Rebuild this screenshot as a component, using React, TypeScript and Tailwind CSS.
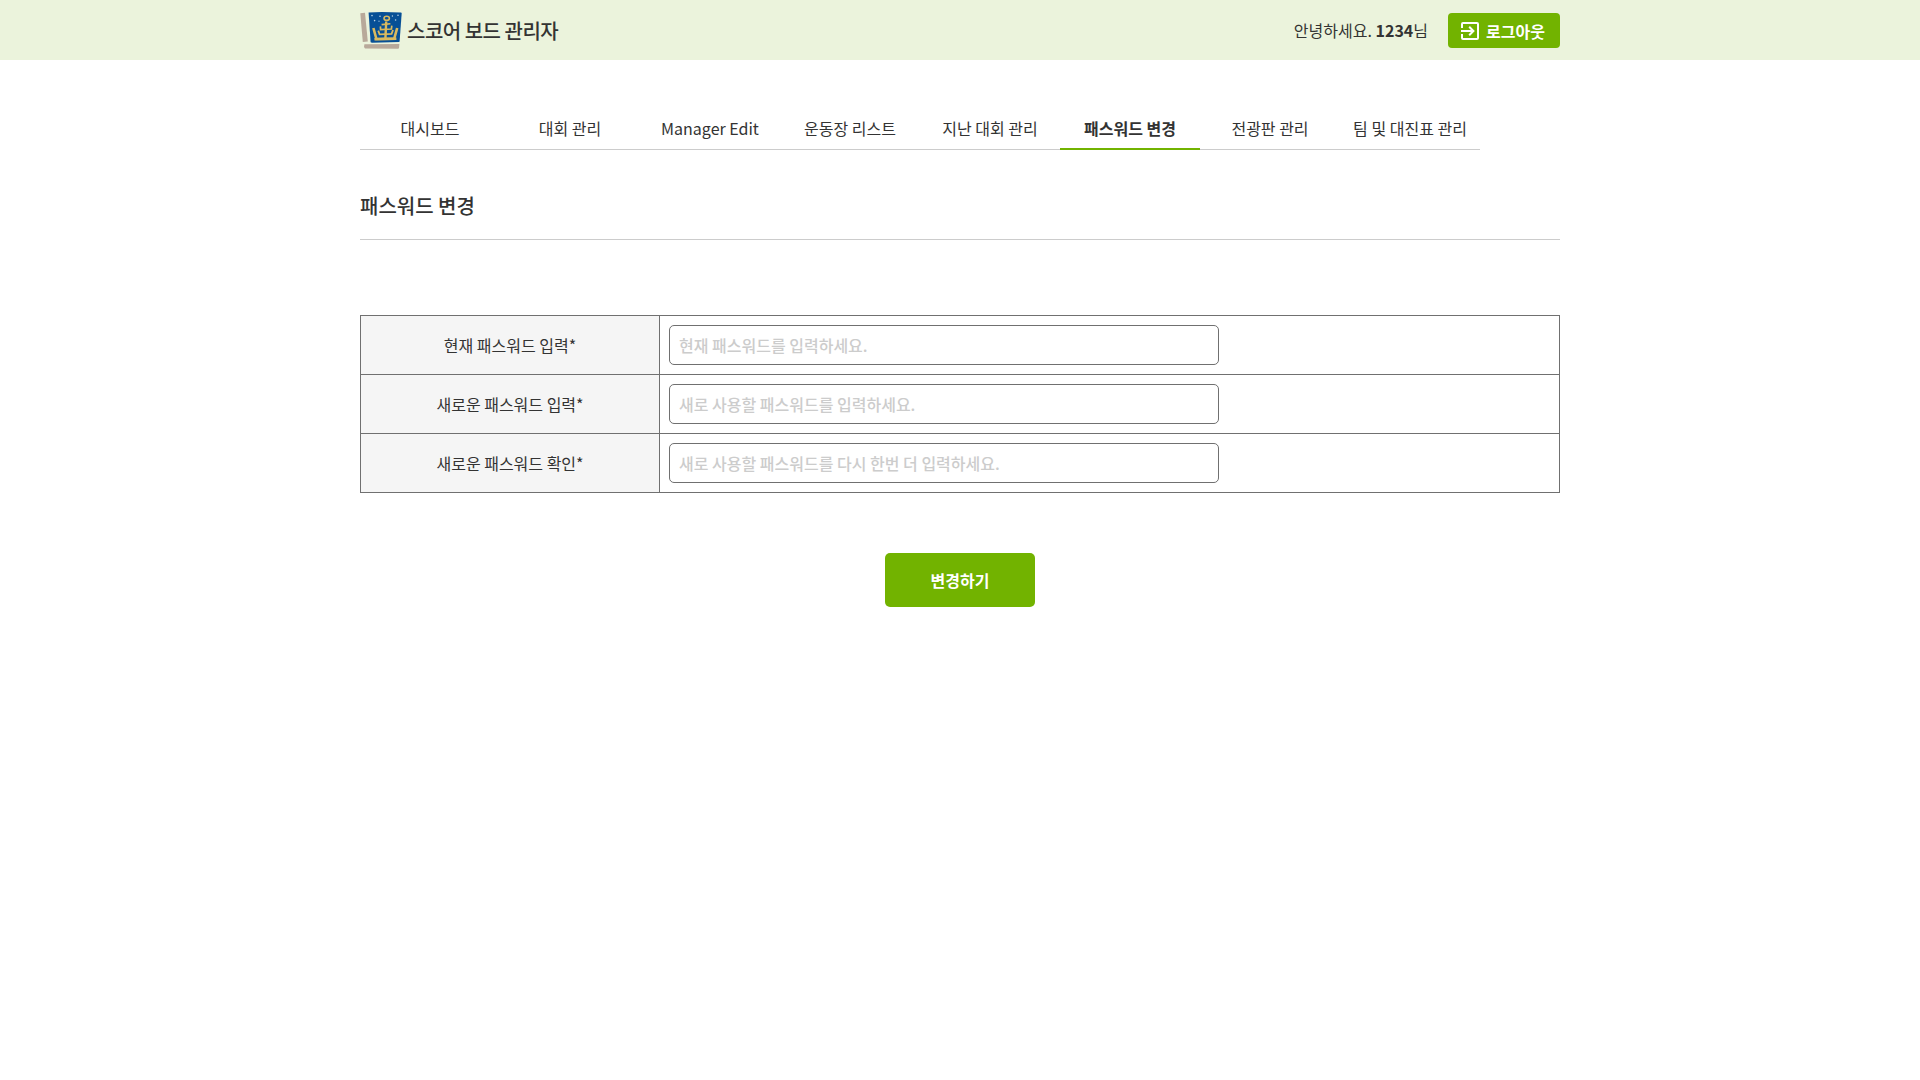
const tabs = [
  '대시보드',
  '대회 관리',
  'Manager Edit',
  '운동장 리스트',
  '지난 대회 관리',
  '패스워드 변경',
  '전광판 관리',
  '팀 및 대진표 관리',
];
const activeTab = '패스워드 변경';

const fields = [
  { id: 'current', label: '현재 패스워드 입력*', placeholder: '현재 패스워드를 입력하세요.' },
  { id: 'next', label: '새로운 패스워드 입력*', placeholder: '새로 사용할 패스워드를 입력하세요.' },
  { id: 'confirm', label: '새로운 패스워드 확인*', placeholder: '새로 사용할 패스워드를 다시 한번 더 입력하세요.' },
];

function Logo() {
  return (
    <svg width="42" height="38" viewBox="0 0 42 38" fill="none">
      <path d="M0.3 1.2L5 0.8L7.8 29.6L2.8 30Z" fill="#b8a99a" />
      <path d="M4.4 32.3L39.4 32L39 36.2L38 36.8L5 36.4L4 35Z" fill="#b8a99a" />
      <path d="M8.6 0.6L22 0L41 0.4L41.7 1L39.6 29.4L39 30L12 30.8L10.6 30.2Z" fill="#064f96" />
      <g stroke="#d9b95f" strokeWidth="2">
        <ellipse cx="26.7" cy="6.3" rx="2.7" ry="2.1" strokeWidth="1.6" />
        <path d="M26.2 9.5L25.4 27" strokeWidth="2.4" />
        <path d="M21.6 12.6L30.4 11.8" strokeWidth="1.6" />
        <path d="M20.4 14.4L20.6 17.6L31.4 17L31.8 13.6" strokeWidth="1.7" />
        <path d="M18.2 18.6L19.6 22.4L31.6 21.8L33 18" strokeWidth="1.8" />
        <path d="M13.4 16L16.4 27L34.2 26.6L37.2 16" strokeWidth="2.6" />
        <path d="M14.4 27.2L36.4 26.8" strokeWidth="2.6" />
      </g>
      <g fill="#b9d1e4">
        <circle cx="12" cy="3.6" r="0.8" />
        <circle cx="20" cy="4.2" r="0.8" />
        <circle cx="14.6" cy="8.6" r="0.8" />
        <circle cx="19" cy="9.2" r="0.6" />
        <circle cx="32.4" cy="4" r="0.7" />
        <circle cx="38" cy="3.2" r="0.8" />
        <circle cx="35.6" cy="8" r="0.8" />
      </g>
    </svg>
  );
}

function ExitIcon() {
  return (
    <svg width="18" height="18" viewBox="0 0 18 18" fill="none" stroke="#fff" strokeWidth="2">
      <path d="M1 6V2Q1 1 2 1H16Q17 1 17 2V16Q17 17 16 17H2Q1 17 1 16V12" />
      <path d="M0 9H12M8.2 4.8L12.4 9L8.2 13.2" />
    </svg>
  );
}

export default function App() {
  return (
    <div className="min-h-screen bg-white font-['Noto_Sans_CJK_KR',sans-serif] text-base text-[#333]">
      <header className="h-[60px] bg-[#ebf3dc]">
        <div className="mx-auto flex h-full w-[1200px] items-center justify-between">
          <div className="flex items-center gap-[5px] pt-[2px]">
            <Logo />
            <span className="text-xl font-medium tracking-[-0.5px]">스코어 보드 관리자</span>
          </div>
          <div className="flex items-center gap-5">
            <span>
              안녕하세요. <b className="font-bold">1234</b>님
            </span>
            <button className="mt-[1px] flex h-[35px] w-[112px] items-center gap-[7px] rounded-[4px] bg-[#72b300] pl-[13px] font-bold text-white">
              <ExitIcon />
              로그아웃
            </button>
          </div>
        </div>
      </header>

      <main className="mx-auto w-[1200px] pt-[50px]">
        <nav className="flex w-[1120px] text-center">
          {tabs.map((tab) => (
            <a
              key={tab}
              className={
                tab === activeTab
                  ? 'h-10 w-[140px] border-b-2 border-[#72b300] leading-[36px] font-bold whitespace-nowrap'
                  : 'h-10 w-[140px] border-b border-[#ccc] leading-[36px] whitespace-nowrap'
              }
            >
              {tab}
            </a>
          ))}
        </nav>

        <h2 className="mt-[30px] h-[60px] border-b border-[#ccc] text-xl leading-[51px] font-medium">패스워드 변경</h2>

        <table className="mt-[75px] w-full table-fixed border-collapse border border-[#707070]">
          <tbody>
            {fields.map((field) => (
              <tr key={field.id} className="h-[59px] border-b border-[#707070]">
                <th className="w-[299px] border-r border-[#707070] bg-[#f5f5f5] p-0 text-center font-normal">
                  {field.label}
                </th>
                <td className="p-0 pl-[9px] align-middle">
                  <input
                    type="password"
                    placeholder={field.placeholder}
                    className="block h-10 w-[550px] rounded-[5px] border border-[#707070] px-[9px] font-medium placeholder:text-[#ccc]"
                  />
                </td>
              </tr>
            ))}
          </tbody>
        </table>

        <div className="mt-[60px] flex justify-center">
          <button className="h-[54px] w-[150px] rounded-[5px] bg-[#72b300] font-bold text-white">변경하기</button>
        </div>
      </main>
    </div>
  );
}
